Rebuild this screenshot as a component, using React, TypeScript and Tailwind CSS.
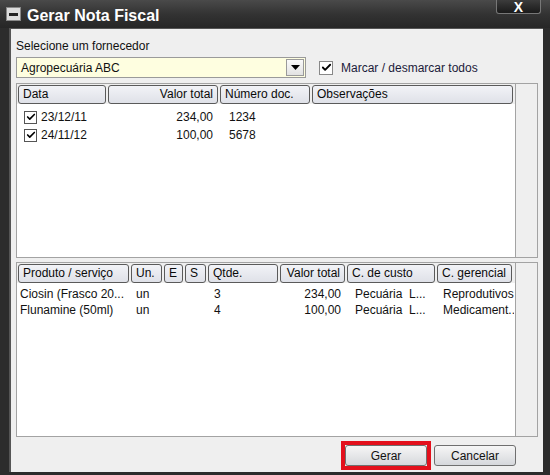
import { Check } from 'lucide-react';

const cols1 = [
  { label: 'Data', w: 'w-[88px]', align: 'text-left' },
  { label: 'Valor total', w: 'w-[110px]', align: 'text-right' },
  { label: 'Número doc.', w: 'w-[90px]', align: 'text-left' },
  { label: 'Observações', w: 'w-[201px]', align: 'text-left' },
];

const rows1 = [
  { data: '23/12/11', valor: '234,00', num: '1234' },
  { data: '24/11/12', valor: '100,00', num: '5678' },
];

const cols2 = [
  { label: 'Produto / serviço', w: 'w-[111px]', align: 'text-left' },
  { label: 'Un.', w: 'w-[31px]', align: 'text-left' },
  { label: 'E', w: 'w-[19px]', align: 'text-left' },
  { label: 'S', w: 'w-[21px]', align: 'text-left' },
  { label: 'Qtde.', w: 'w-[70px]', align: 'text-left' },
  { label: 'Valor total', w: 'w-[65px]', align: 'text-right' },
  { label: 'C. de custo', w: 'w-[88px]', align: 'text-left' },
  { label: 'C. gerencial', w: 'w-[75px]', align: 'text-left' },
];

// cell classes per column of the products table (width = header + gap)
const cells2 = [
  'w-[113px] pl-[2px]',
  'w-[33px] pl-[5px]',
  'w-[21px]',
  'w-[23px]',
  'w-[72px] pl-[6px]',
  'w-[67px] pr-[6px] text-right',
  'w-[90px] pl-[8px]',
  'w-[77px] pl-[6px]',
];

const rows2 = [
  ['Ciosin (Frasco 20...', 'un', '', '', '3', '234,00', 'Pecuária  L...', 'Reprodutivos'],
  ['Flunamine (50ml)', 'un', '', '', '4', '100,00', 'Pecuária  L...', 'Medicament..'],
];

function HeaderCell({ label, w, align }: { label: string; w: string; align: string }) {
  return (
    <div
      className={`${w} ${align} h-[19px] shrink-0 overflow-hidden whitespace-nowrap rounded-[3px] border border-[#5a5a5a] bg-gradient-to-b from-[#f2f3f7] to-[#dfe1e8] px-[4px] leading-[17px] text-[#0a0a0a]`}
    >
      {label}
    </div>
  );
}

function Box() {
  return (
    <span className="flex h-[13px] w-[13px] shrink-0 items-center justify-center border border-[#555] bg-white">
      <Check className="h-[10px] w-[10px] text-black" strokeWidth={4} />
    </span>
  );
}

export default function App() {
  return (
    <div
      className="flex h-[475px] w-[550px] flex-col bg-[#2c2c2c] text-[12px] text-[#111]"
      style={{ fontFamily: '"Liberation Sans", Arial, sans-serif' }}
    >
      {/* Title bar */}
      <div className="flex h-[28px] shrink-0 items-start bg-gradient-to-b from-[#4a4a4a] via-[#333] to-[#262626]">
        <div className="ml-[6px] mt-[7px] flex h-[14px] w-[15px] items-center justify-center border border-[#888] bg-[#dcdcdc]">
          <div className="h-[3px] w-[9px] bg-[#222]" />
        </div>
        <span className="ml-[6px] mt-[4px] text-[16px] font-bold text-white">Gerar Nota Fiscal</span>
        <div className="ml-auto mr-[9px] flex h-[14px] w-[45px] items-center justify-center rounded-b-[3px] border border-t-0 border-[#777] bg-gradient-to-b from-[#3c3c3c] to-[#1a1a1a] text-[14px] font-bold leading-none text-white">
          X
        </div>
      </div>

      {/* Body */}
      <div className="ml-[9px] mr-[7px] flex min-h-0 flex-1 flex-col border-l-[2px] border-t border-[#555] bg-[#efefef] px-[5px] pt-[10px]">
        <div className="mb-[4px] leading-[14px]">Selecione um fornecedor</div>
        <div className="flex items-center">
          <div className="flex h-[21px] w-[290px] items-center border border-[#9a9a9a] bg-[#fefee0] pl-[4px]">
            <span className="flex-1">Agropecuária ABC</span>
            <div className="mr-[1px] flex h-[17px] w-[18px] items-center justify-center border border-[#9a9a9a] bg-gradient-to-b from-[#fafafa] to-[#e2e2e2]">
              <svg width="9" height="5" viewBox="0 0 9 5">
                <path d="M0 0h9L4.5 5z" fill="#000" />
              </svg>
            </div>
          </div>
          <div className="ml-[13px] flex items-center gap-[8px]">
            <span className="flex h-[14px] w-[14px] items-center justify-center border border-[#888] bg-white">
              <Check className="h-[11px] w-[11px] text-black" strokeWidth={4} />
            </span>
            <span className="text-[#1b1b3a]">Marcar / desmarcar todos</span>
          </div>
        </div>

        {/* Table 1 */}
        <div className="mt-[5px] flex h-[175px] border border-[#a3a3a3] bg-white">
          <div className="flex flex-1 flex-col">
            <div className="flex gap-[2px] bg-[#efefef] pl-[1px] pt-[1px]">
              {cols1.map(c => (
                <HeaderCell key={c.label} {...c} />
              ))}
            </div>
            <div className="pl-[1px] pt-[4px]">
              {rows1.map(r => (
                <div key={r.data} className="flex h-[18px] items-center">
                  <div className="flex w-[90px] items-center gap-[4px] pl-[6px]">
                    <Box />
                    <span>{r.data}</span>
                  </div>
                  <div className="w-[112px] pr-[7px] text-right">{r.valor}</div>
                  <div className="pl-[9px]">{r.num}</div>
                </div>
              ))}
            </div>
          </div>
          <div className="w-[22px] border-l border-[#a3a3a3] bg-[#efefef]" />
        </div>

        {/* Table 2 */}
        <div className="mt-[4px] flex h-[175px] border border-[#a3a3a3] bg-white">
          <div className="flex flex-1 flex-col">
            <div className="flex gap-[2px] bg-[#efefef] pl-[1px] pt-[1px]">
              {cols2.map(c => (
                <HeaderCell key={c.label} {...c} />
              ))}
            </div>
            <div className="pl-[1px] pt-[3px]">
              {rows2.map(r => (
                <div key={r[0]} className="flex h-[16px] items-center">
                  {r.map((v, i) => (
                    <div key={i} className={`${cells2[i]} shrink-0 overflow-hidden whitespace-pre`}>
                      {v}
                    </div>
                  ))}
                </div>
              ))}
            </div>
          </div>
          <div className="w-[22px] border-l border-[#a3a3a3] bg-[#efefef]" />
        </div>

        {/* Buttons */}
        <div className="mt-[4px] flex justify-end gap-[3px] pr-[22px]">
          <div className="border-[4px] border-[#e3101c]">
            <button className="h-[21px] w-[82px] rounded-[3px] border border-[#6f6f6f] bg-gradient-to-b from-[#f6f6f6] to-[#d6d8dc]">
              Gerar
            </button>
          </div>
          <div className="pt-[4px]">
            <button className="h-[21px] w-[82px] rounded-[3px] border border-[#6f6f6f] bg-gradient-to-b from-[#f6f6f6] to-[#d6d8dc]">
              Cancelar
            </button>
          </div>
        </div>
      </div>
      <div className="h-[3px] shrink-0" />
    </div>
  );
}
